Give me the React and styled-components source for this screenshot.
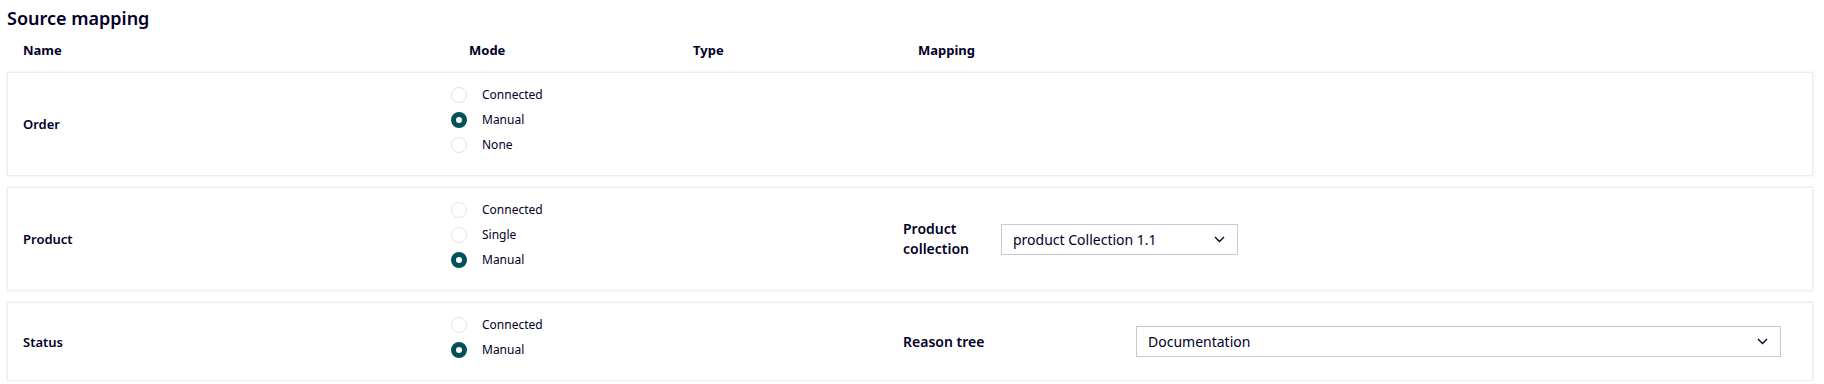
import React from "react";
import styled, { createGlobalStyle } from "styled-components";

const Global = createGlobalStyle`
  html, body { margin: 0; padding: 0; background: #ffffff; }
  body { font-family: "Noto Sans", "Open Sans", sans-serif; color: #000028; }
  * { box-sizing: border-box; }
`;

const Page = styled.div`
  padding: 6px 11px 0 7px;
`;

const Title = styled.h2`
  margin: 0;
  font-size: 18px;
  line-height: 24px;
  font-weight: 600;
  color: #000028;
`;

const HeaderRow = styled.div`
  display: grid;
  grid-template-columns: 446px 224px 225px 1fr;
  align-items: center;
  height: 24px;
  margin-top: 8px;
  padding-left: 16px;
`;

const HeaderCell = styled.div`
  font-size: 13px;
  font-weight: 700;
  line-height: 18px;
`;

const Cards = styled.div`
  display: flex;
  flex-direction: column;
  gap: 11px;
  margin-top: 10px;
`;

const Card = styled.div`
  display: grid;
  grid-template-columns: 428px 452px 1fr;
  align-items: center;
  background: #fff;
  border: 1px solid #ececec;
  box-shadow: 0 0 3px rgba(0, 0, 40, 0.08);
  padding-left: 15px;
`;

const NameCell = styled.div`
  font-size: 13px;
  font-weight: 600;
  line-height: 18px;
`;

const RadioGroup = styled.div`
  display: flex;
  flex-direction: column;
  gap: 5px;
  margin: 12px 0 20px;
`;

const RadioItem = styled.label`
  display: flex;
  align-items: center;
  height: 20px;
  gap: 15px;
  font-size: 12px;
  line-height: 16px;
  color: #000028;
`;

const RadioDot = styled.span`
  width: 16px;
  height: 16px;
  border-radius: 50%;
  flex: none;
  background: #fff;
  border: ${(p) => (p.$checked ? "5px solid #005159" : "1.5px solid #e3e3e3")};
`;

const MappingCell = styled.div`
  display: flex;
  align-items: center;
  padding-right: 31px;
`;

const MapLabel = styled.div`
  width: ${(p) => p.$width}px;
  margin-right: 12px;
  font-size: 14px;
  font-weight: 600;
  line-height: 20px;
  flex: none;
`;

const Select = styled.div`
  display: flex;
  align-items: center;
  justify-content: space-between;
  height: 31px;
  width: ${(p) => (p.$width ? `${p.$width}px` : "auto")};
  flex: ${(p) => (p.$width ? "none" : "1")};
  border: 1px solid #c9c9d3;
  padding: 0 12px 0 11px;
  font-size: 14px;
  color: #000028;
  background: #fff;
`;

const Chevron = () => (
  <svg width="11" height="7" viewBox="0 0 11 7" fill="none">
    <polyline points="1,1 5.5,5.5 10,1" stroke="#000028" strokeWidth="1.4" fill="none" />
  </svg>
);

const rows = [
  {
    name: "Order",
    options: ["Connected", "Manual", "None"],
    checked: "Manual",
  },
  {
    name: "Product",
    options: ["Connected", "Single", "Manual"],
    checked: "Manual",
    mapping: { label: "Product collection", labelWidth: 86, value: "product Collection 1.1", width: 237 },
  },
  {
    name: "Status",
    options: ["Connected", "Manual"],
    checked: "Manual",
    mapping: { label: "Reason tree", labelWidth: 221, value: "Documentation" },
  },
];

export default function App() {
  return (
    <Page>
      <Global />
      <Title>Source mapping</Title>
      <HeaderRow>
        <HeaderCell>Name</HeaderCell>
        <HeaderCell>Mode</HeaderCell>
        <HeaderCell>Type</HeaderCell>
        <HeaderCell>Mapping</HeaderCell>
      </HeaderRow>
      <Cards>
        {rows.map((r) => (
          <Card key={r.name}>
            <NameCell>{r.name}</NameCell>
            <RadioGroup>
              {r.options.map((o) => (
                <RadioItem key={o}>
                  <RadioDot $checked={o === r.checked} />
                  {o}
                </RadioItem>
              ))}
            </RadioGroup>
            <MappingCell>
              {r.mapping && (
                <>
                  <MapLabel $width={r.mapping.labelWidth}>{r.mapping.label}</MapLabel>
                  <Select $width={r.mapping.width}>
                    <span>{r.mapping.value}</span>
                    <Chevron />
                  </Select>
                </>
              )}
            </MappingCell>
          </Card>
        ))}
      </Cards>
    </Page>
  );
}
